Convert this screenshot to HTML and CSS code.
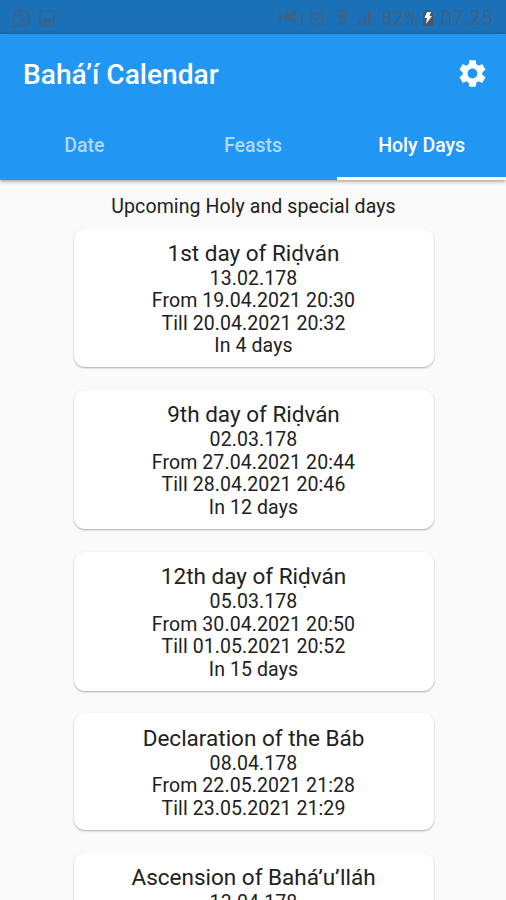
FILE: index.html
```html
<!DOCTYPE html>
<html lang="en">
<head>
<meta charset="utf-8">
<title>Bahá’í Calendar</title>
<link rel="stylesheet" href="styles.css">
</head>
<body>
<div class="status">
  <svg class="notices" width="48" height="24" viewBox="0 0 48 24" fill="none" stroke="currentColor" stroke-width="1.6">
    <path d="M2 20.500 3.400 15.700A8 8 0 1 1 7 19.300Z"/>
    <path d="M7 8c-1 3 3.500 8 7.500 7l.8-2.300-2.300-1.200-1.300 1c-1.200-.5-2-1.400-2.400-2.400l.9-1.100-1-2.200z" fill="currentColor" stroke="none"/>
    <rect x="29" y="5" width="14" height="15" rx="2.500"/>
    <path d="M31.500 17v-3l3-2 2 1.500 2-1 2 1.500v3z" fill="currentColor" stroke="none"/>
  </svg>
  <svg class="signals" width="94" height="24" viewBox="0 0 94 24" fill="none" stroke="currentColor" stroke-width="1.600">
    <path d="M1 6v11M23 6v11M6 5l13 14"/>
    <path d="M5 9h4l8-5v14l-8-4H5z" fill="currentColor" stroke="none"/>
    <circle cx="38" cy="13" r="6"/>
    <path d="M31 7l3-3M45 7l-3-3M35 12l3 2 4-4M33 19l1-2M43 19l-1-2"/>
    <path d="M56 6.500q7-4.500 14 0"/>
    <path d="M57.500 9q5.500-4 11 0L63 15zM60 16.500h6L63 20z" fill="currentColor" stroke="none"/>
    <path d="M79 19v-4h3v4zM84 19v-8h3v8zM89 19V5h3v14z" fill="currentColor" stroke="none"/>
  </svg>
  <span class="percent">82%</span>
  <svg class="battery" width="12" height="18" viewBox="0 0 12 18">
    <path d="M1 3h3V1h4v2h3v14H1z" fill="#495663"/>
    <path d="M5 3h4L7.500 7H10L4 15l1-6H2.500z" fill="#fff"/>
  </svg>
  <span class="clock">07:25</span>
</div>
<header class="appbar">
  <div class="toolbar">
    <h1>Bahá’í Calendar</h1>
    <svg class="gear" viewBox="0 0 24 24" fill="currentColor"><path d="M19.140 12.940c.04-.3.060-.61.060-.94 0-.32-.020-.64-.070-.94l2.030-1.580c.18-.14.230-.41.120-.61l-1.920-3.320c-.12-.22-.37-.29-.59-.22l-2.390.96c-.5-.38-1.030-.7-1.620-.94l-.36-2.540c-.04-.24-.24-.41-.48-.41h-3.840c-.24 0-.43.17-.47.41l-.36 2.540c-.59.24-1.130.57-1.620.94l-2.390-.96c-.22-.08-.47 0-.59.22L2.740 8.870c-.12.21-.08.47.12.61l2.030 1.580c-.05.3-.09.63-.09.94s.02.64.07.94l-2.030 1.580c-.18.14-.23.41-.12.61l1.920 3.320c.12.22.37.29.59.22l2.390-.96c.5.38 1.030.7 1.620.94l.36 2.540c.05.24.24.41.48.41h3.840c.24 0 .44-.17.47-.41l.36-2.540c.59-.24 1.130-.56 1.620-.94l2.390.96c.22.08.47 0 .59-.22l1.920-3.320c.12-.22.07-.47-.12-.61l-2.010-1.580zM12 15.600c-1.980 0-3.600-1.620-3.600-3.600s1.620-3.600 3.600-3.600 3.600 1.620 3.600 3.600-1.620 3.600-3.600 3.600z"/></svg>
  </div>
  <nav class="tabs">
    <span class="tab">Date</span>
    <span class="tab">Feasts</span>
    <span class="tab active">Holy Days</span>
  </nav>
</header>
<main>
  <p class="intro">Upcoming Holy and special days</p>
  <section class="card"><h2>1st day of Riḍván</h2><p>13.02.178</p><p>From 19.04.2021 20:30</p><p>Till 20.04.2021 20:32</p><p>In 4 days</p></section>
  <section class="card"><h2>9th day of Riḍván</h2><p>02.03.178</p><p>From 27.04.2021 20:44</p><p>Till 28.04.2021 20:46</p><p>In 12 days</p></section>
  <section class="card"><h2>12th day of Riḍván</h2><p>05.03.178</p><p>From 30.04.2021 20:50</p><p>Till 01.05.2021 20:52</p><p>In 15 days</p></section>
  <section class="card"><h2>Declaration of the Báb</h2><p>08.04.178</p><p>From 22.05.2021 21:28</p><p>Till 23.05.2021 21:29</p></section>
  <section class="card"><h2>Ascension of Bahá’u’lláh</h2><p>13.04.178</p></section>
</main>
</body>
</html>
```
FILE: styles.css
```css
* { box-sizing: border-box; }
body {
  margin: 0;
  height: 900px;
  overflow: hidden;
  display: flex;
  flex-direction: column;
  background: #fafafa;
  color: #212121;
  font-family: Roboto, "Noto Sans", sans-serif;
}
h1, h2, p { margin: 0; }
.status {
  flex: none;
  height: 34px;
  padding: 2px 13px 0 11px;
  display: flex;
  align-items: center;
  background: #1a71b8;
  color: #3f6284;
  font-size: 20px;
}
.signals { margin-left: auto; }
.percent { margin-left: 9px; }
.battery { margin: 0 7px 0 3px; }
.clock { font-size: 21px; }
.appbar {
  flex: none;
  height: 146px;
  background: #2196f3;
  color: #fff;
  box-shadow: 0 1px 4px rgba(0, 0, 0, .45);
}
.toolbar {
  height: 79px;
  padding: 0 18px 0 23px;
  display: flex;
  align-items: center;
  justify-content: space-between;
}
h1 { font-size: 28.100px; font-weight: 500; line-height: 32px; padding-top: 3px; }
.gear { width: 33px; height: 33px; margin-right: -1px; }
.tabs { height: 67px; display: grid; grid-template-columns: repeat(3, 1fr); }
.tab {
  height: 67px;
  border-bottom: 3px solid transparent;
  text-align: center;
  font-size: 19.500px;
  font-weight: 500;
  line-height: 65px;
  color: #b0dafb;
}
.active { color: #fff; border-color: #fff; }
main {
  flex: 1;
  min-height: 0;
  overflow: hidden;
  padding: 15.500px 0 0 1px;
  display: flex;
  flex-direction: column;
  align-items: center;
}
.appbar { position: relative; }
.intro, .card p {
  font-size: 19.500px;
  line-height: 22.500px;
  letter-spacing: .09px;
}
.intro { margin-bottom: 10.500px; }
.card {
  flex: none;
  width: 360px;
  margin-bottom: 22.700px;
  padding: 11.200px 0 9.700px;
  border-radius: 11px;
  background: #fff;
  box-shadow: 0 1px 2px rgba(0, 0, 0, .32);
  text-align: center;
}
h2 { padding-bottom: 1.500px; font-size: 22.500px; font-weight: 400; line-height: 26.600px; }
```
